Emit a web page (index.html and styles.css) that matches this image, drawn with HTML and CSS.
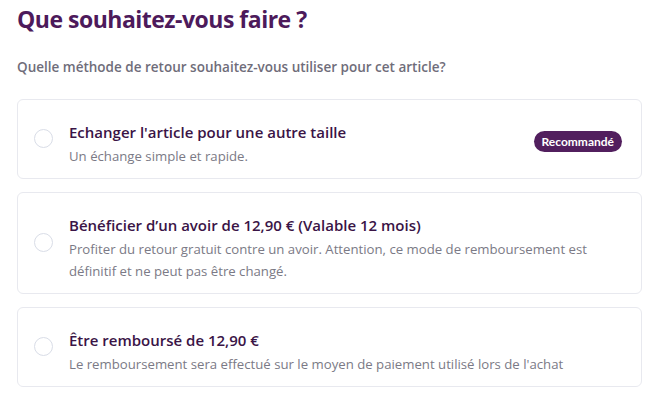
FILE: index.html
```html
<!DOCTYPE html>
<html lang="fr">
<head>
<meta charset="utf-8">
<link rel="stylesheet" href="styles.css">
</head>
<body>
<main class="page">
  <h1 class="heading">Que souhaitez-vous faire ?</h1>
  <p class="intro">Quelle méthode de retour souhaitez-vous utiliser pour cet article?</p>
  <div class="options">
    <label class="option">
      <span class="radio"></span>
      <span class="text">
        <span class="title">Echanger l'article pour une autre taille</span>
        <span class="desc">Un échange simple et rapide.</span>
      </span>
      <span class="badge">Recommandé</span>
    </label>
    <label class="option">
      <span class="radio"></span>
      <span class="text">
        <span class="title">Bénéficier d’un avoir de 12,90 € (Valable 12 mois)</span>
        <span class="desc">Profiter du retour gratuit contre un avoir. Attention, ce mode de remboursement est définitif et ne peut pas être changé.</span>
      </span>
    </label>
    <label class="option">
      <span class="radio"></span>
      <span class="text">
        <span class="title">Être remboursé de 12,90 €</span>
        <span class="desc">Le remboursement sera effectué sur le moyen de paiement utilisé lors de l'achat</span>
      </span>
    </label>
  </div>
</main>
</body>
</html>
```

FILE: styles.css
```css
html, body {
  margin: 0;
  padding: 0;
  background: #ffffff;
}
body {
  font-family: "Open Sans", "Noto Sans", sans-serif;
  color: #3a1446;
}
.page {
  padding: 3px 25px 0 17px;
}
.heading {
  margin: 0;
  font-size: 23px;
  line-height: 32px;
  font-weight: 700;
  letter-spacing: -0.5px;
  color: #4d1a5b;
}
.intro {
  margin: 22px 0 0;
  font-size: 13.5px;
  line-height: 20px;
  font-weight: 600;
  color: #6f6d7a;
}
.options {
  display: flex;
  flex-direction: column;
  gap: 13px;
  margin-top: 22px;
}
.option {
  display: flex;
  align-items: center;
  gap: 16px;
  padding: 19px 19px 11px 16px;
  border: 1px solid #e8e9ef;
  border-radius: 6px;
}
.radio {
  flex: none;
  width: 17px;
  height: 17px;
  margin-top: -10px;
  border: 1px solid #d9dde7;
  border-radius: 50%;
}
.text {
  flex: 1;
  display: flex;
  flex-direction: column;
}
.title {
  font-size: 15px;
  line-height: 26px;
  font-weight: 600;
  color: #3a1446;
}
.desc {
  font-size: 13.2px;
  line-height: 22px;
  color: #7b7a86;
}
.badge {
  flex: none;
  align-self: center;
  margin-top: -4px;
  font-family: Lato, sans-serif;
  font-size: 12px;
  line-height: 21px;
  font-weight: 700;
  color: #ffffff;
  background: #521f5e;
  border-radius: 11px;
  padding: 0 8px;
}
```
